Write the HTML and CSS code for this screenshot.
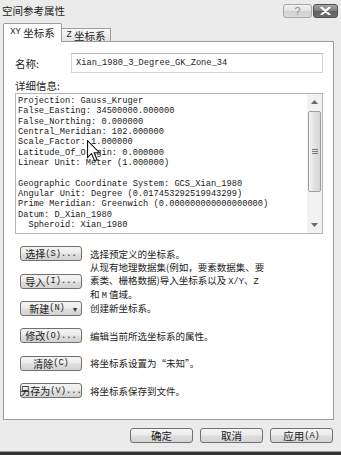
FILE: index.html
```html
<!DOCTYPE html>
<html lang="zh-CN">
<head>
    <meta charset="UTF-8">
    <meta name="viewport" content="width=device-width, initial-scale=1.0">
    <title>空间参考属性</title>
    <link rel="stylesheet" href="styles.css">
</head>
<body>
    <div class="window">
        <div class="titlebar">
            <span class="title">空间参考属性</span>
            <div class="caption-btns">
                <div class="cap help">?</div>
                <div class="cap close">
                    <svg width="11" height="8" viewBox="0 0 11 8">
                        <path d="M1.5 0.5 L9.5 7.5 M9.5 0.5 L1.5 7.5" stroke="#fff" stroke-width="2.2" stroke-linecap="round"/>
                    </svg>
                </div>
            </div>
        </div>

        <div class="tabs">
            <div class="tab active"><span class="m">XY</span>&nbsp;坐标系</div>
            <div class="tab"><span class="m">Z</span>&nbsp;坐标系</div>
        </div>

        <div class="panel">
            <div class="name-row">
                <span class="label">名称:</span>
                <div class="field">Xian_1980_3_Degree_GK_Zone_34</div>
            </div>

            <div class="detail-label">详细信息:</div>
            <div class="details">
<pre class="details-text">Projection: Gauss_Kruger
False_Easting: 34500000.000000
False_Northing: 0.000000
Central_Meridian: 102.000000
Scale_Factor: 1.000000
Latitude_Of_Origin: 0.000000
Linear Unit: Meter (1.000000)

Geographic Coordinate System: GCS_Xian_1980
Angular Unit: Degree (0.017453292519943299)
Prime Meridian: Greenwich (0.000000000000000000)
Datum: D_Xian_1980
  Spheroid: Xian_1980</pre>
                <div class="scrollbar">
                    <div class="sb-arrow">
                        <svg width="7" height="4" viewBox="0 0 7 4"><path d="M0 4 L3.5 0 L7 4 Z" fill="#6a6a6a"/></svg>
                    </div>
                    <div class="sb-thumb">
                        <div class="grip"></div>
                        <div class="grip"></div>
                        <div class="grip"></div>
                    </div>
                    <div class="sb-track"></div>
                    <div class="sb-arrow">
                        <svg width="7" height="4" viewBox="0 0 7 4"><path d="M0 0 L7 0 L3.5 4 Z" fill="#6a6a6a"/></svg>
                    </div>
                </div>
                <!-- mouse pointer sitting over the text -->
                <svg class="pointer" width="13" height="22" viewBox="0 0 12 20">
                    <path d="M0.5 0.5 L0.5 16 L4.2 12.4 L7 19 L9.3 18 L6.6 11.6 L11.5 11.6 Z" fill="#fff" stroke="#111" stroke-width="1"/>
                </svg>
            </div>

            <div class="actions">
                <div class="row">
                    <div class="btn">选择<span class="m">(S)...</span></div>
                    <div class="desc">选择预定义的坐标系。</div>
                </div>
                <div class="row">
                    <div class="btn">导入<span class="m">(I)...</span></div>
                    <div class="desc tall">从现有地理数据集(例如，要素数据集、要<br>素类、栅格数据)导入坐标系以及 <span class="m">X/Y</span>、<span class="m">Z</span><br>和 <span class="m">M</span> 值域。</div>
                </div>
                <div class="row">
                    <div class="btn btn-menu">新建<span class="m">(N)</span><span class="caret">▾</span></div>
                    <div class="desc">创建新坐标系。</div>
                </div>
                <div class="row">
                    <div class="btn">修改<span class="m">(O)...</span></div>
                    <div class="desc">编辑当前所选坐标系的属性。</div>
                </div>
                <div class="row">
                    <div class="btn">清除<span class="m">(C)</span></div>
                    <div class="desc">将坐标系设置为“未知”。</div>
                </div>
                <div class="row">
                    <div class="btn">另存为<span class="m">(V)...</span></div>
                    <div class="desc">将坐标系保存到文件。</div>
                </div>
            </div>
        </div>

        <div class="footer">
            <div class="btn btn-wide">确定</div>
            <div class="btn btn-wide">取消</div>
            <div class="btn btn-wide">应用<span class="m">(A)</span></div>
        </div>

        <div class="bottom-bar"></div>
    </div>
</body>
</html>
```

FILE: styles.css
```css
body {
    margin: 0;
    padding: 0;
    background-color: #ebebeb;
}

.window {
    width: 341px;
    height: 455px;
    background-color: #ebebeb;
    display: flex;
    flex-direction: column;
    font-family: "Noto Sans CJK SC", sans-serif;
    font-size: 10px;
    color: #222;
    overflow: hidden;
}

.m {
    font-family: "Liberation Mono", monospace;
    font-size: 8.7px;
}

/* title bar */
.titlebar {
    height: 22px;
    display: flex;
    justify-content: space-between;
    align-items: flex-start;
    flex: none;
}

.title {
    font-size: 10.5px;
    line-height: 14px;
    margin: 4px 0 0 2px;
    color: #1e1e1e;
}

.caption-btns {
    display: flex;
    gap: 1px;
    margin: 4px 3px 0 0;
}

.cap {
    height: 14px;
    box-sizing: border-box;
    border-radius: 3px;
    display: flex;
    align-items: center;
    justify-content: center;
}

.help {
    width: 29px;
    border: 1px solid #a9a9a9;
    background: linear-gradient(#f2f2f2, #e2e2e2 50%, #d2d2d2 51%, #d8d8d8);
    color: #8c8c8c;
    font: 11px "Liberation Sans", sans-serif;
}

.close {
    width: 25px;
    border: 1px solid #4f4f4f;
    background: linear-gradient(#a5a5a5, #7c7c7c 50%, #626262 51%, #6e6e6e);
}

/* tabs */
.tabs {
    height: 19px;
    display: flex;
    align-items: flex-end;
    padding-left: 3px;
    position: relative;
    z-index: 1;
    flex: none;
}

.tab {
    box-sizing: border-box;
    border: 1px solid #9c9c9c;
    border-bottom: none;
    display: flex;
    align-items: center;
    justify-content: center;
    white-space: nowrap;
    font-size: 10.5px;
}

.tab.active {
    width: 59px;
    height: 19px;
    margin-bottom: -1px;
    background-color: #fff;
    border-radius: 2px 2px 0 0;
    padding-bottom: 2px;
}

.tab:not(.active) {
    width: 49px;
    height: 13px;
    border-left: none;
    background: linear-gradient(#f8f8f8, #e4e4e4);
}

/* panel */
.panel {
    margin-left: 3px;
    width: 331px;
    height: 379px;
    box-sizing: border-box;
    border: 1px solid #9c9c9c;
    background-color: #fff;
    flex: none;
}

.name-row {
    display: flex;
    align-items: center;
    height: 20px;
    margin-top: 11px;
    padding-left: 11px;
}

.label {
    width: 56px;
    font-size: 10.5px;
}

.field {
    width: 252px;
    height: 20px;
    box-sizing: border-box;
    border: 1px solid #d4d4d4;
    border-top-color: #b9b9b9;
    display: flex;
    align-items: center;
    padding-left: 4px;
    font-family: "Liberation Mono", monospace;
    font-size: 8.7px;
}

.detail-label {
    margin: 7px 0 0 11px;
    line-height: 12px;
    font-size: 10.5px;
}

.details {
    position: relative;
    margin: 1px 0 0 11px;
    width: 308px;
    height: 141px;
    box-sizing: border-box;
    border: 1px solid #b5b5b5;
    display: flex;
}

.details-text {
    flex: 1;
    margin: 0;
    padding: 2px 0 0 2px;
    font-family: "Liberation Mono", monospace;
    font-size: 8.7px;
    line-height: 10.33px;
    white-space: pre;
    overflow: hidden;
    color: #1a1a1a;
}

.scrollbar {
    width: 15px;
    display: flex;
    flex-direction: column;
    background-color: #f1f1f1;
}

.sb-arrow {
    height: 16px;
    display: flex;
    align-items: center;
    justify-content: center;
    flex: none;
}

.sb-thumb {
    height: 81px;
    margin: 1px 1px 0;
    box-sizing: border-box;
    border: 1px solid #9e9e9e;
    border-radius: 2px;
    background: linear-gradient(90deg, #f4f4f4, #e2e2e2 50%, #d6d6d6);
    display: flex;
    flex-direction: column;
    align-items: center;
    justify-content: center;
    gap: 1px;
    flex: none;
}

.grip {
    width: 6px;
    height: 1px;
    background-color: #7a7a7a;
}

.sb-track {
    flex: 1;
}

.pointer {
    position: absolute;
    left: 71px;
    top: 46px;
}

/* action rows */
.actions {
    margin-top: 6px;
}

.row {
    height: 27.4px;
    display: flex;
    align-items: center;
    gap: 8px;
    padding-left: 16px;
}

.btn {
    width: 62px;
    height: 15px;
    box-sizing: border-box;
    border: 1px solid #707070;
    border-radius: 3px;
    background: linear-gradient(#f4f4f4, #ececec 45%, #dddddd 55%, #d3d3d3);
    display: flex;
    align-items: center;
    justify-content: center;
    white-space: nowrap;
    font-size: 10px;
    flex: none;
    color: #1a1a1a;
}

.btn-menu {
    position: relative;
    padding-right: 8px;
}

.caret {
    position: absolute;
    right: 4px;
    top: 0;
    font-size: 8px;
    line-height: 13px;
    color: #333;
}

.desc {
    white-space: nowrap;
    font-size: 9.5px;
    line-height: 14px;
}

.desc.tall {
    line-height: 12.6px;
    margin-top: 1.5px;
}

/* dialog buttons */
.footer {
    display: flex;
    justify-content: flex-end;
    gap: 7px;
    padding: 8px 8px 0 0;
    flex: none;
}

.btn-wide {
    width: 63px;
    font-size: 10.5px;
}

.bottom-bar {
    margin-top: auto;
    height: 3px;
    background-color: #333;
    border-top: 1px solid #9a9a9a;
    flex: none;
}
```
